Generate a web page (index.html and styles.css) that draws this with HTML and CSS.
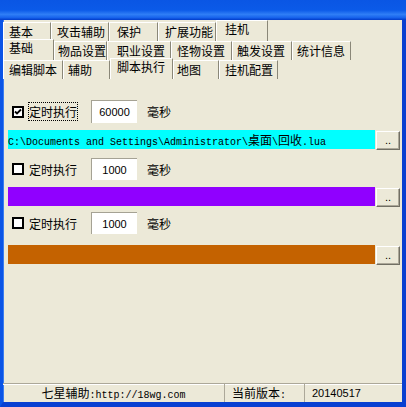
FILE: index.html
```html
<!DOCTYPE html>
<html lang="zh-CN">
<head>
    <meta charset="UTF-8">
    <title>七星辅助</title>
    <link rel="stylesheet" href="styles.css">
</head>
<body>
    <div class="window">
        <!-- Bottom edge of the XP title bar -->
        <div class="titlebar"></div>

        <div class="frame">
            <!-- Tab rows -->
            <div class="tab-row">
                <div class="tab t1">基本</div>
                <div class="tab t2">攻击辅助</div>
                <div class="tab t3">保护</div>
                <div class="tab t4">扩展功能</div>
                <div class="tab t5 active">挂机</div>
            </div>
            <div class="tab-row">
                <div class="tab r2a active">基础</div>
                <div class="tab r2b">物品设置</div>
                <div class="tab r2c">职业设置</div>
                <div class="tab r2d">怪物设置</div>
                <div class="tab r2e">触发设置</div>
                <div class="tab r2f">统计信息</div>
            </div>
            <div class="tab-row">
                <div class="tab r3a">编辑脚本</div>
                <div class="tab r3b">辅助</div>
                <div class="tab r3c active">脚本执行</div>
                <div class="tab r3d">地图</div>
                <div class="tab r3e">挂机配置</div>
            </div>

            <!-- Script slots -->
            <div class="panel">
                <div class="timer-row first">
                    <span class="check checked">
                        <svg width="8" height="8" viewBox="0 0 8 8"><path d="M1 3.5 L3 5.5 L7 1.5" fill="none" stroke="#000" stroke-width="1.8"/></svg>
                    </span>
                    <span class="check-label focus">定时执行</span>
                    <span class="ms-input">60000</span>
                    <span class="unit">毫秒</span>
                </div>
                <div class="file-row gap7">
                    <div class="file-bar cyan"><span class="mono">C:\Documents and Settings\Administrator\</span><span class="cjk">桌面</span><span class="mono">\</span><span class="cjk">回收</span><span class="mono">.lua</span></div>
                    <button class="browse">..</button>
                </div>

                <div class="timer-row second">
                    <span class="check"></span>
                    <span class="check-label">定时执行</span>
                    <span class="ms-input">1000</span>
                    <span class="unit">毫秒</span>
                </div>
                <div class="file-row gap7">
                    <div class="file-bar purple"></div>
                    <button class="browse">..</button>
                </div>

                <div class="timer-row third">
                    <span class="check"></span>
                    <span class="check-label">定时执行</span>
                    <span class="ms-input">1000</span>
                    <span class="unit">毫秒</span>
                </div>
                <div class="file-row gap11">
                    <div class="file-bar orange"></div>
                    <button class="browse">..</button>
                </div>
            </div>

            <!-- Status bar -->
            <div class="statusbar">
                <div class="status-cell site">七星辅助<span class="mono">:http://18wg.com</span></div>
                <div class="status-cell label">当前版本<span class="mono">:</span></div>
                <div class="status-cell version">20140517</div>
            </div>
        </div>
    </div>
</body>
</html>
```

FILE: styles.css
```css
/* General */
body {
    margin: 0;
    padding: 0;
    background-color: #ece9d8;
    font-family: "Noto Sans CJK SC", "Liberation Sans", sans-serif;
    font-size: 12px;
    color: #000;
}

.window {
    width: 406px;
    height: 407px;
    overflow: hidden;
}

.titlebar {
    height: 20px;
    background: linear-gradient(to bottom, #0a56e4 0, #0b5ae8 50%, #2f7ef6 72%, #1763ec 88%, #003ac9 100%);
}

.frame {
    height: 382px;
    background-color: #ece9d8;
    border-left: 3px solid #0a54e6;
    border-right: 4px solid #0a3fd0;
    border-bottom: 5px solid #0840d2;
    box-shadow: inset 1px 0 0 #3a7cf0;
    display: flex;
    flex-direction: column;
}

/* Tabs */
.tab-row {
    display: flex;
    height: 19px;
    align-items: flex-end;
}

.tab-row:first-child {
    margin-top: 2px;
}

.tab {
    box-sizing: border-box;
    height: 19px;
    line-height: 18px;
    border-top: 1px solid #fff;
    border-left: 1px solid #fff;
    border-right: 1px solid #8a8778;
    white-space: nowrap;
}

.tab.active {
    height: 21px;
    margin-top: -2px;
    line-height: 16px;
    position: relative;
    background-color: #ece9d8;
}

.t1 { width: 48px; padding-left: 5px; }
.t2 { width: 58px; padding-left: 5px; }
.t3 { width: 49px; padding-left: 7px; }
.t4 { width: 58px; padding-left: 6px; }
.t5 { width: 52px; padding-left: 8px; }

.r2a { width: 51px; padding-left: 5px; }
.r2b { width: 53px; padding-left: 3px; }
.r2c { width: 64px; padding-left: 9px; }
.r2d { width: 61px; padding-left: 5px; }
.r2e { width: 60px; padding-left: 4px; }
.r2f { width: 59px; padding-left: 4px; }

.r3a { width: 60px; padding-left: 5px; }
.r3b { width: 47px; padding-left: 4px; }
.r3c { width: 63px; padding-left: 6px; }
.r3d { width: 46px; padding-left: 3px; }
.r3e { width: 59px; padding-left: 5px; }

/* Panel */
.panel {
    flex: 1;
    padding-left: 5px;
    display: flex;
    flex-direction: column;
}

.timer-row {
    display: flex;
    align-items: center;
    height: 23px;
}

.timer-row.first { margin-top: 21px; }
.timer-row.second { margin-top: 9px; height: 22px; }
.timer-row.third { margin-top: 6px; height: 22px; }

.check {
    box-sizing: border-box;
    width: 12px;
    height: 12px;
    margin-left: 4px;
    border: 2px solid #000;
    background-color: #fff;
    display: flex;
    align-items: center;
    justify-content: center;
}

.check-label {
    margin-left: 4px;
    padding: 0;
    line-height: 17px;
    border: 1px dotted transparent;
}

.check-label.focus {
    border-color: #000;
}

.ms-input {
    box-sizing: border-box;
    width: 46px;
    height: 100%;
    margin-left: 13px;
    background-color: #fff;
    border-top: 1px solid #a5a294;
    border-left: 1px solid #a5a294;
    font-family: "Liberation Sans", sans-serif;
    font-size: 11px;
    display: flex;
    align-items: center;
    justify-content: center;
}

.unit {
    margin-left: 10px;
}

.file-row {
    display: flex;
    height: 19px;
    margin-right: 2px;
}

.gap7 { margin-top: 7px; }
.gap11 { margin-top: 11px; }

.file-bar {
    width: 368px;
    height: 100%;
    line-height: 19px;
    white-space: nowrap;
    overflow: hidden;
}

.cyan { background-color: #00ffff; }
.purple { background-color: #9000ff; }
.orange { background-color: #c46200; }

.mono {
    font-family: "Liberation Mono", monospace;
    font-size: 10px;
}

.cjk {
    font-size: 12px;
}

.browse {
    box-sizing: border-box;
    width: 24px;
    height: 19px;
    margin: 1px 0 0 1px;
    padding: 0;
    background-color: #ece9d8;
    border: 1px solid;
    border-color: #fff #716f64 #716f64 #fff;
    box-shadow: inset -1px -1px 0 #aca899;
    font-family: "Liberation Sans", sans-serif;
    font-size: 11px;
    line-height: 15px;
    color: #000;
}

/* Status bar */
.statusbar {
    display: flex;
    height: 18px;
    border-top: 1px solid #aca899;
    box-shadow: inset 0 1px 0 #fff;
}

.status-cell {
    box-sizing: border-box;
    height: 100%;
    line-height: 18px;
    white-space: nowrap;
    border-right: 1px solid #aca899;
}

.status-cell.site {
    width: 222px;
    text-align: center;
}

.status-cell.label {
    width: 80px;
    padding-left: 7px;
}

.status-cell.version {
    flex: 1;
    padding-left: 7px;
    border-right: none;
    font-family: "Liberation Sans", sans-serif;
    font-size: 11px;
}
```
